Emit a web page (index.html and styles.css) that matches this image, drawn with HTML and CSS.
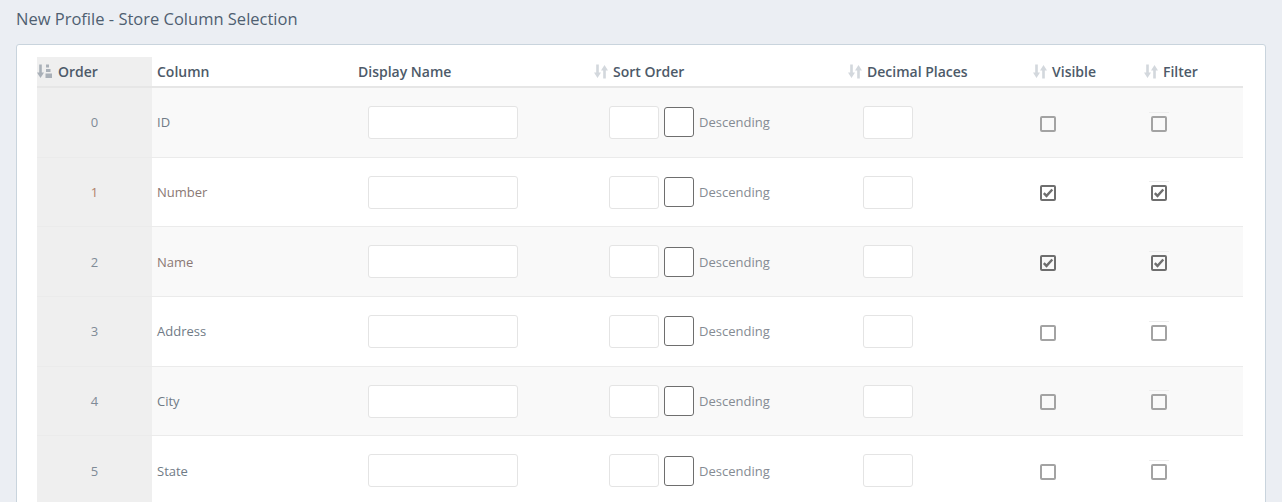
FILE: index.html
```html
<!DOCTYPE html>
<html lang="en">
<head>
    <meta charset="UTF-8">
    <title>New Profile - Store Column Selection</title>
    <link rel="stylesheet" href="styles.css">
</head>
<body>

<h1 class="page-title">New Profile - Store Column Selection</h1>

<div class="card">
    <table class="columns-table">
        <colgroup>
            <col class="c-order">
            <col class="c-column">
            <col class="c-display">
            <col class="c-sort">
            <col class="c-decimal">
            <col class="c-visible">
            <col class="c-filter">
        </colgroup>
        <thead>
            <tr>
                <th class="order-cell head-order">
                    <svg class="sort-icon active" width="15" height="15" viewBox="0 0 15 15">
                        <path d="M3.5 0.5v9" stroke="currentColor" stroke-width="2.6"/>
                        <path d="M0 8.5h7l-3.5 5.5z" fill="currentColor"/>
                        <rect x="9" y="0.5" width="3" height="3" fill="currentColor"/>
                        <rect x="9" y="5" width="4.5" height="3" fill="currentColor"/>
                        <rect x="8.5" y="9.5" width="6.5" height="4.5" fill="currentColor"/>
                    </svg>Order
                </th>
                <th>Column</th>
                <th>Display Name</th>
                <th><svg class="sort-icon" width="14" height="15" viewBox="0 0 14 15"><path d="M3.5 0.5v9M10.5 14.5v-9" stroke="currentColor" stroke-width="2.6"/><path d="M0 8.5h7l-3.5 5.5zM7 6.5h7l-3.5-5.5z" fill="currentColor"/></svg>Sort Order</th>
                <th><svg class="sort-icon" width="14" height="15" viewBox="0 0 14 15"><path d="M3.5 0.5v9M10.5 14.5v-9" stroke="currentColor" stroke-width="2.6"/><path d="M0 8.5h7l-3.5 5.5zM7 6.5h7l-3.5-5.5z" fill="currentColor"/></svg>Decimal Places</th>
                <th><svg class="sort-icon" width="14" height="15" viewBox="0 0 14 15"><path d="M3.5 0.5v9M10.5 14.5v-9" stroke="currentColor" stroke-width="2.6"/><path d="M0 8.5h7l-3.5 5.5zM7 6.5h7l-3.5-5.5z" fill="currentColor"/></svg>Visible</th>
                <th><svg class="sort-icon" width="14" height="15" viewBox="0 0 14 15"><path d="M3.5 0.5v9M10.5 14.5v-9" stroke="currentColor" stroke-width="2.6"/><path d="M0 8.5h7l-3.5 5.5zM7 6.5h7l-3.5-5.5z" fill="currentColor"/></svg>Filter</th>
            </tr>
        </thead>
        <tbody id="rows"></tbody>
    </table>
</div>

<script>
    // Column rows for the store profile
    const columns = [
        { name: "ID", visible: false, filter: false },
        { name: "Number", visible: true, filter: true, warm: true },
        { name: "Name", visible: true, filter: true, warmName: true },
        { name: "Address", visible: false, filter: false },
        { name: "City", visible: false, filter: false },
        { name: "State", visible: false, filter: false }
    ];

    const check = '<svg width="12" height="12" viewBox="0 0 12 12"><path d="M1.8 6.2l2.7 2.7 5.8-6.4" fill="none" stroke="#6f6f6f" stroke-width="2.4"/></svg>';

    function box(on) {
        return '<span class="check-box' + (on ? ' checked' : '') + '">' + (on ? check : '') + '</span>';
    }

    let html = "";
    columns.forEach(function (col, i) {
        html += '<tr>' +
            '<td class="order-cell' + (col.warm ? ' warm' : '') + '">' + i + '</td>' +
            '<td class="name-cell' + (col.warm || col.warmName ? ' warm-name' : '') + '">' + col.name + '</td>' +
            '<td class="display-cell"><input type="text" class="text-input wide"></td>' +
            '<td class="sort-cell"><div class="sort-wrap"><input type="text" class="text-input narrow"><span class="desc-box"></span><span class="desc-label">Descending</span></div></td>' +
            '<td class="decimal-cell"><input type="text" class="text-input narrow"></td>' +
            '<td class="visible-cell">' + box(col.visible) + '</td>' +
            '<td class="filter-cell"><span class="filter-wrap">' + box(col.filter) + '</span></td>' +
            '</tr>';
    });
    document.getElementById("rows").innerHTML = html;
</script>

</body>
</html>
```

FILE: styles.css
```css
body {
    margin: 0;
    padding: 0 16px;
    background-color: #ebeef3;
    font-family: 'Open Sans', sans-serif;
    color: #707b86;
    font-size: 13px;
}

.page-title {
    margin: 0;
    padding: 7px 0 0;
    height: 44px;
    box-sizing: border-box;
    font-size: 16.5px;
    font-weight: 400;
    line-height: 24px;
    color: #4f5f71;
}

.card {
    background: #fff;
    border: 1px solid #c9d4dd;
    border-radius: 3px;
    padding: 12px 19px 0 20px;
    height: 500px;
}

.columns-table {
    width: 1206px;
    border-collapse: collapse;
    table-layout: fixed;
}

.c-order { width: 115px; }
.c-column { width: 201px; }
.c-display { width: 236px; }
.c-sort { width: 254px; }
.c-decimal { width: 185px; }
.c-visible { width: 111px; }
.c-filter { width: 104px; }

.columns-table th {
    text-align: left;
    font-size: 14px;
    font-weight: 600;
    color: #4d5a69;
    height: 29px;
    padding: 0 0 0 5px;
    border-bottom: 2px solid #e6e6e6;
    white-space: nowrap;
}

.columns-table th.head-order {
    padding-left: 0;
}

.sort-icon {
    color: #d3d8dd;
    vertical-align: -2px;
    margin-right: 5px;
}

.sort-icon.active {
    color: #a9b0b8;
    margin-right: 6px;
}

.columns-table td {
    height: 68.7px;
    padding: 0;
    border-top: 1px solid #ebebeb;
    vertical-align: middle;
}

.columns-table tbody tr:first-child td {
    border-top: none;
}

.columns-table tbody tr:nth-child(odd) {
    background: #f9f9f9;
}

.columns-table .order-cell {
    background: #efefef;
}

td.order-cell {
    text-align: center;
    color: #7f8b97;
}

td.order-cell.warm {
    color: #b0816c;
}

.name-cell {
    padding-left: 5px !important;
}

.name-cell.warm-name {
    color: #8a7874;
}

.display-cell {
    padding-left: 15px !important;
}

.sort-cell,
.decimal-cell {
    padding-left: 20px !important;
}

.visible-cell {
    padding-left: 12px !important;
}

.filter-cell {
    padding-left: 12px !important;
}

.text-input {
    box-sizing: border-box;
    height: 33px;
    border: 1px solid #e4e4e4;
    border-radius: 3px;
    background: #fff;
    padding: 0 6px;
    font-family: inherit;
    vertical-align: middle;
}

.text-input.wide { width: 150px; }
.text-input.narrow { width: 50px; }

.sort-wrap {
    display: flex;
    align-items: center;
}

.desc-box {
    box-sizing: border-box;
    width: 30px;
    height: 30px;
    margin-left: 5px;
    border: 1px solid #6e6e6e;
    border-radius: 3px;
    background: #fff;
}

.desc-label {
    margin-left: 5px;
    color: #858b93;
}

.check-box {
    box-sizing: border-box;
    display: inline-flex;
    align-items: center;
    justify-content: center;
    width: 16px;
    height: 16px;
    border: 2px solid #a3a3a3;
    border-radius: 2px;
    vertical-align: middle;
}

.check-box.checked {
    border-color: #6e6e6e;
}

.filter-wrap {
    position: relative;
    display: inline-block;
    vertical-align: middle;
    line-height: 0;
}

/* faint rule that sits just above the filter box */
.filter-wrap::before {
    content: "";
    position: absolute;
    left: -2px;
    right: -2px;
    top: -4px;
    border-top: 1px solid #eeeeee;
}
```
